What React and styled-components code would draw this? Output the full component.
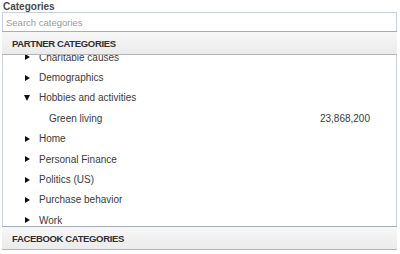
import React, { useEffect, useRef } from "react";
import styled, { createGlobalStyle } from "styled-components";

const GlobalStyle = createGlobalStyle`
  html, body {
    margin: 0;
    padding: 0;
    background: #ffffff;
  }
  body {
    font-family: "Liberation Sans", Arial, sans-serif;
  }
`;

const Wrapper = styled.div`
  width: 400px;
  height: 254px;
  display: flex;
  flex-direction: column;
  padding: 2px 3px 0 2px;
  box-sizing: border-box;
`;

const Label = styled.div`
  font-size: 10px;
  font-weight: bold;
  color: #4a4a4a;
  height: 10px;
  line-height: 10px;
  padding-left: 1px;
`;

const Panel = styled.div`
  display: flex;
  flex-direction: column;
  border: 1px solid #c9d0db;
  border-bottom: none;
`;

const Search = styled.input`
  height: 18px;
  border: none;
  outline: none;
  padding: 0 3px;
  font-family: inherit;
  font-size: 9.5px;
  color: #333;
  background: #fff;
  &::placeholder {
    color: #9a9a9a;
  }
`;

const Header = styled.div`
  height: 22px;
  display: flex;
  align-items: center;
  padding-left: 10px;
  font-size: 9.5px;
  font-weight: bold;
  color: #2f2f2f;
  letter-spacing: -0.35px;
  background: linear-gradient(#f7f7f7, #ebebeb);
  border-top: 1px solid #a6adba;
  border-bottom: 1px solid #b5b5b5;
  margin: 0 -1px;
`;

const List = styled.div`
  height: 171px;
  overflow: hidden;
  display: flex;
  flex-direction: column;
`;

const Row = styled.div`
  flex: 0 0 20.4px;
  display: flex;
  align-items: center;
  padding-left: ${(p) => (p.$child ? 46 : 21)}px;
  padding-right: 26px;
  font-size: 10px;
  color: #3a3a3a;
`;

const Arrow = styled.span`
  width: 0;
  height: 0;
  margin-right: 9px;
  ${(p) =>
    p.$open
      ? `border-left: 3px solid transparent;
         border-right: 3px solid transparent;
         border-top: 6px solid #111;`
      : `border-top: 3px solid transparent;
         border-bottom: 3px solid transparent;
         border-left: 5px solid #111;
         margin-left: 1px;`}
`;

const Name = styled.span`
  flex: 1;
`;

const Count = styled.span`
  color: #3a3a3a;
`;

const rows = [
  { name: "Charitable causes" },
  { name: "Demographics" },
  { name: "Hobbies and activities", open: true },
  { name: "Green living", child: true, count: "23,868,200" },
  { name: "Home" },
  { name: "Personal Finance" },
  { name: "Politics (US)" },
  { name: "Purchase behavior" },
  { name: "Work" },
];

export default function App() {
  const listRef = useRef(null);

  useEffect(() => {
    if (listRef.current) listRef.current.scrollTop = 8;
  }, []);

  return (
    <>
      <GlobalStyle />
      <Wrapper>
        <Label>Categories</Label>
        <Panel>
          <Search placeholder="Search categories" />
          <Header>PARTNER CATEGORIES</Header>
          <List ref={listRef}>
            {rows.map((r) => (
              <Row key={r.name} $child={r.child}>
                {!r.child && <Arrow $open={r.open} />}
                <Name>{r.name}</Name>
                {r.count && <Count>{r.count}</Count>}
              </Row>
            ))}
          </List>
          <Header>FACEBOOK CATEGORIES</Header>
        </Panel>
      </Wrapper>
    </>
  );
}
